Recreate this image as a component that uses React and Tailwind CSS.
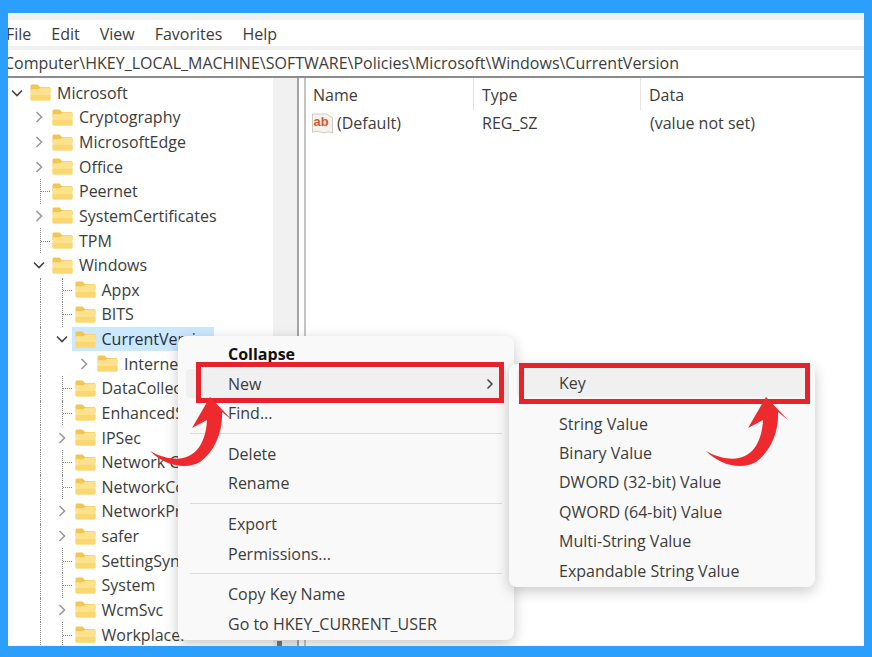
import React from 'react';

const tree = [
  { name: 'Microsoft', depth: 0, arrow: 'open' },
  { name: 'Cryptography', depth: 1, arrow: 'closed' },
  { name: 'MicrosoftEdge', depth: 1, arrow: 'closed' },
  { name: 'Office', depth: 1, arrow: 'closed' },
  { name: 'Peernet', depth: 1, stub: true },
  { name: 'SystemCertificates', depth: 1, arrow: 'closed' },
  { name: 'TPM', depth: 1, stub: true },
  { name: 'Windows', depth: 1, arrow: 'open' },
  { name: 'Appx', depth: 2, stub: true },
  { name: 'BITS', depth: 2, stub: true },
  { name: 'CurrentVersion', depth: 2, arrow: 'open', selected: true },
  { name: 'Internet Settings', depth: 3, arrow: 'closed' },
  { name: 'DataCollection', depth: 2, stub: true },
  { name: 'EnhancedStorage', depth: 2, stub: true },
  { name: 'IPSec', depth: 2, arrow: 'closed' },
  { name: 'Network Connections', depth: 2, stub: true },
  { name: 'NetworkConnectivity', depth: 2, stub: true },
  { name: 'NetworkProvider', depth: 2, arrow: 'closed' },
  { name: 'safer', depth: 2, arrow: 'closed' },
  { name: 'SettingSync', depth: 2, stub: true },
  { name: 'System', depth: 2, stub: true },
  { name: 'WcmSvc', depth: 2, arrow: 'closed' },
  { name: 'Workplace.', depth: 2, stub: true },
];

const indents = ['pl-0', 'pl-[22px]', 'pl-[44.5px]', 'pl-[67px]'];

const Folder = () => (
  <svg width="21" height="17" viewBox="0 0 21 17" className="flex-none">
    <path d="M0.5 2.2C0.5 1.2 1.2 0.5 2.2 0.5H7.5L10 3H19C20 3 20.5 3.7 20.5 4.5V8H0.5Z" fill="#f2c653" />
    <path d="M0.5 5.2H8.2L10.6 3.4H19C20 3.4 20.5 4 20.5 5V15C20.5 16 20 16.5 19 16.5H2C1 16.5 0.5 16 0.5 15Z" fill="#fde28e" />
    <path d="M0.5 11H20.5V15C20.5 16 20 16.5 19 16.5H2C1 16.5 0.5 16 0.5 15Z" fill="#fad771" />
  </svg>
);

const Chevron = ({ open }) => (
  <svg width="18" height="18" viewBox="0 0 18 18" className="flex-none bg-white">
    {open ? (
      <path d="M4 6.5L9 11.5L14 6.5" fill="none" stroke="#444" strokeWidth="1.6" />
    ) : (
      <path d="M6.5 4L11.5 9L6.5 14" fill="none" stroke="#999" strokeWidth="1.6" />
    )}
  </svg>
);

const TreeRow = ({ item }) => {
  const guides = [];
  if (item.stub) guides.push(item.depth === 1 ? 32 : 54);
  if (item.depth >= 2) guides.push(32);

  return (
    <div className={`relative flex h-[24.64px] flex-none items-center whitespace-nowrap ${indents[item.depth]}`}>
      {guides.map((x) => (
        <span
          key={x}
          className="absolute top-0 bottom-0 border-l border-dotted border-[#8a8a8a]"
          style={{ left: x }}
        />
      ))}
      {item.stub && (
        <span
          className="absolute top-1/2 w-[9px] border-t border-dotted border-[#8a8a8a]"
          style={{ left: item.depth === 1 ? 33 : 55 }}
        />
      )}
      <div className="relative flex w-[22px] flex-none justify-start">
        {item.arrow && <Chevron open={item.arrow === 'open'} />}
      </div>
      <div className={`relative flex h-[24.64px] items-center gap-[6px] ${item.selected ? '-ml-[3px] w-[142px] bg-[#cce8ff] pl-[3px] text-[#1f2f3f]' : ''}`}>
        <Folder />
        <span>{item.name}</span>
      </div>
    </div>
  );
};

const ColumnHeader = ({ width, label, last, inset }) => (
  <div className={`flex h-[32px] items-center pt-[1px] ${inset} ${width} ${last ? '' : 'border-r border-[#e5e5e5]'}`}>
    {label}
  </div>
);

const MenuRow = ({ label, bold, active, submenu }) => (
  <div
    className={`mx-2 flex h-[29.4px] items-center justify-between rounded pl-[42px] ${active ? 'bg-[#f0f0f0]' : ''} ${bold ? 'font-bold text-[#111]' : ''}`}
  >
    <span>{label}</span>
    {submenu && (
      <svg width="10" height="12" viewBox="0 0 10 12" className="mr-[11px]">
        <path d="M2.5 1.5L7 6L2.5 10.5" fill="none" stroke="#444" strokeWidth="1.5" />
      </svg>
    )}
  </div>
);

const Separator = () => (
  <div className="flex h-[11.5px] items-center px-3">
    <div className="h-px w-full bg-[#dcdcdc]" />
  </div>
);

const CurvedArrow = ({ className }) => (
  <svg width="83" height="72" viewBox="0 0 83 72" className={`absolute ${className}`}>
    <path d="M0 55C12 62 25 64 33 62C48 59 56 44 57 24L42 32L60 1L82 24L72 16C73 35 65 55 50 66C36 74 15 70 0 55Z" fill="#ee2a2e" />
  </svg>
);

export default function App() {
  return (
    <div className="h-[657px] w-[872px] overflow-hidden bg-[#2b9ffb] pt-[13px] pr-2 pb-[11px] pl-2 font-['Open_Sans','Noto_Sans',sans-serif] text-[16px] text-[#3c3c3c]">
      <div className="relative flex h-full flex-col overflow-hidden bg-white">
        <div className="h-[7px] flex-none bg-[#f1f1f1]" />
        <div className="h-[26px] flex-none pt-[1px]">
          <div className="-ml-[2px] flex h-full items-center gap-[20px]">
            <span>File</span>
            <span>Edit</span>
            <span>View</span>
            <span>Favorites</span>
            <span>Help</span>
          </div>
        </div>
        <div className="h-[4px] flex-none bg-[#f1f1f1]" />
        <div className="-ml-[4px] flex h-[26px] flex-none items-center whitespace-nowrap">
          Computer\HKEY_LOCAL_MACHINE\SOFTWARE\Policies\Microsoft\Windows\CurrentVersion
        </div>
        <div className="h-[2px] flex-none bg-[#8c8c8c]" />
        <div className="flex min-h-0 flex-1">
          <div className="flex w-[265px] flex-none flex-col overflow-hidden pt-[2.5px]">
            {tree.map((item) => (
              <TreeRow key={item.name} item={item} />
            ))}
          </div>
          <div className="flex w-[24px] flex-none items-end bg-[#f1f1f1] pl-[4px]">
            <div className="h-[5px] w-[5px] bg-[#777]" />
          </div>
          <div className="w-[2px] flex-none bg-[#a5a5a5]" />
          <div className="w-[5px] flex-none" />
          <div className="w-[2px] flex-none bg-[#c4c4c4]" />
          <div className="flex-1">
            <div className="flex">
              <ColumnHeader width="w-[168px]" inset="pl-[7px]" label="Name" />
              <ColumnHeader width="w-[167px]" inset="pl-[8px]" label="Type" />
              <ColumnHeader width="flex-1" inset="pl-[8px]" label="Data" last />
            </div>
            <div className="flex h-[26px] items-center">
              <div className="flex w-[168px] items-center gap-[4px] pl-[6px]">
                <svg width="21" height="21" viewBox="0 0 21 21" className="flex-none">
                  <path d="M0.5 1H15L20.5 5V20C16 17.5 14 20.5 10 19.5C6 18.5 4 17.5 0.5 19.5Z" fill="#f6f2ed" stroke="#cfcac4" />
                  <text x="1.5" y="13" fontSize="13" fontWeight="700" fill="#d9572f" fontFamily="Liberation Sans, sans-serif">ab</text>
                </svg>
                <span>(Default)</span>
              </div>
              <div className="w-[168px] pl-[8px]">REG_SZ</div>
              <div className="pl-[8px]">(value not set)</div>
            </div>
          </div>
        </div>

        <div className="absolute top-[323px] left-[170px] w-[336px] rounded-lg bg-[#f9f9f9] pt-[3.5px] pb-[1px] shadow-[0_4px_14px_rgba(0,0,0,0.22)]">
          <MenuRow label="Collapse" bold />
          <MenuRow label="New" active submenu />
          <MenuRow label="Find..." />
          <Separator />
          <MenuRow label="Delete" />
          <MenuRow label="Rename" />
          <Separator />
          <MenuRow label="Export" />
          <MenuRow label="Permissions..." />
          <Separator />
          <MenuRow label="Copy Key Name" />
          <MenuRow label="Go to HKEY_CURRENT_USER" />
        </div>

        <div className="absolute top-[351px] left-[501px] w-[306px] rounded-lg bg-[#f9f9f9] pt-[4px] pb-[2px] shadow-[0_4px_14px_rgba(0,0,0,0.22)]">
          <MenuRow label="Key" active />
          <Separator />
          <MenuRow label="String Value" />
          <MenuRow label="Binary Value" />
          <MenuRow label="DWORD (32-bit) Value" />
          <MenuRow label="QWORD (64-bit) Value" />
          <MenuRow label="Multi-String Value" />
          <MenuRow label="Expandable String Value" />
        </div>

        <div className="absolute top-[349px] left-[188px] h-[41px] w-[308px] border-[5px] border-[#e8222b]" />
        <div className="absolute top-[350px] left-[511px] h-[41px] w-[291px] border-[5px] border-[#e8222b]" />
        <CurvedArrow className="top-[383px] left-[142px]" />
        <CurvedArrow className="top-[383px] left-[698px]" />
      </div>
    </div>
  );
}
